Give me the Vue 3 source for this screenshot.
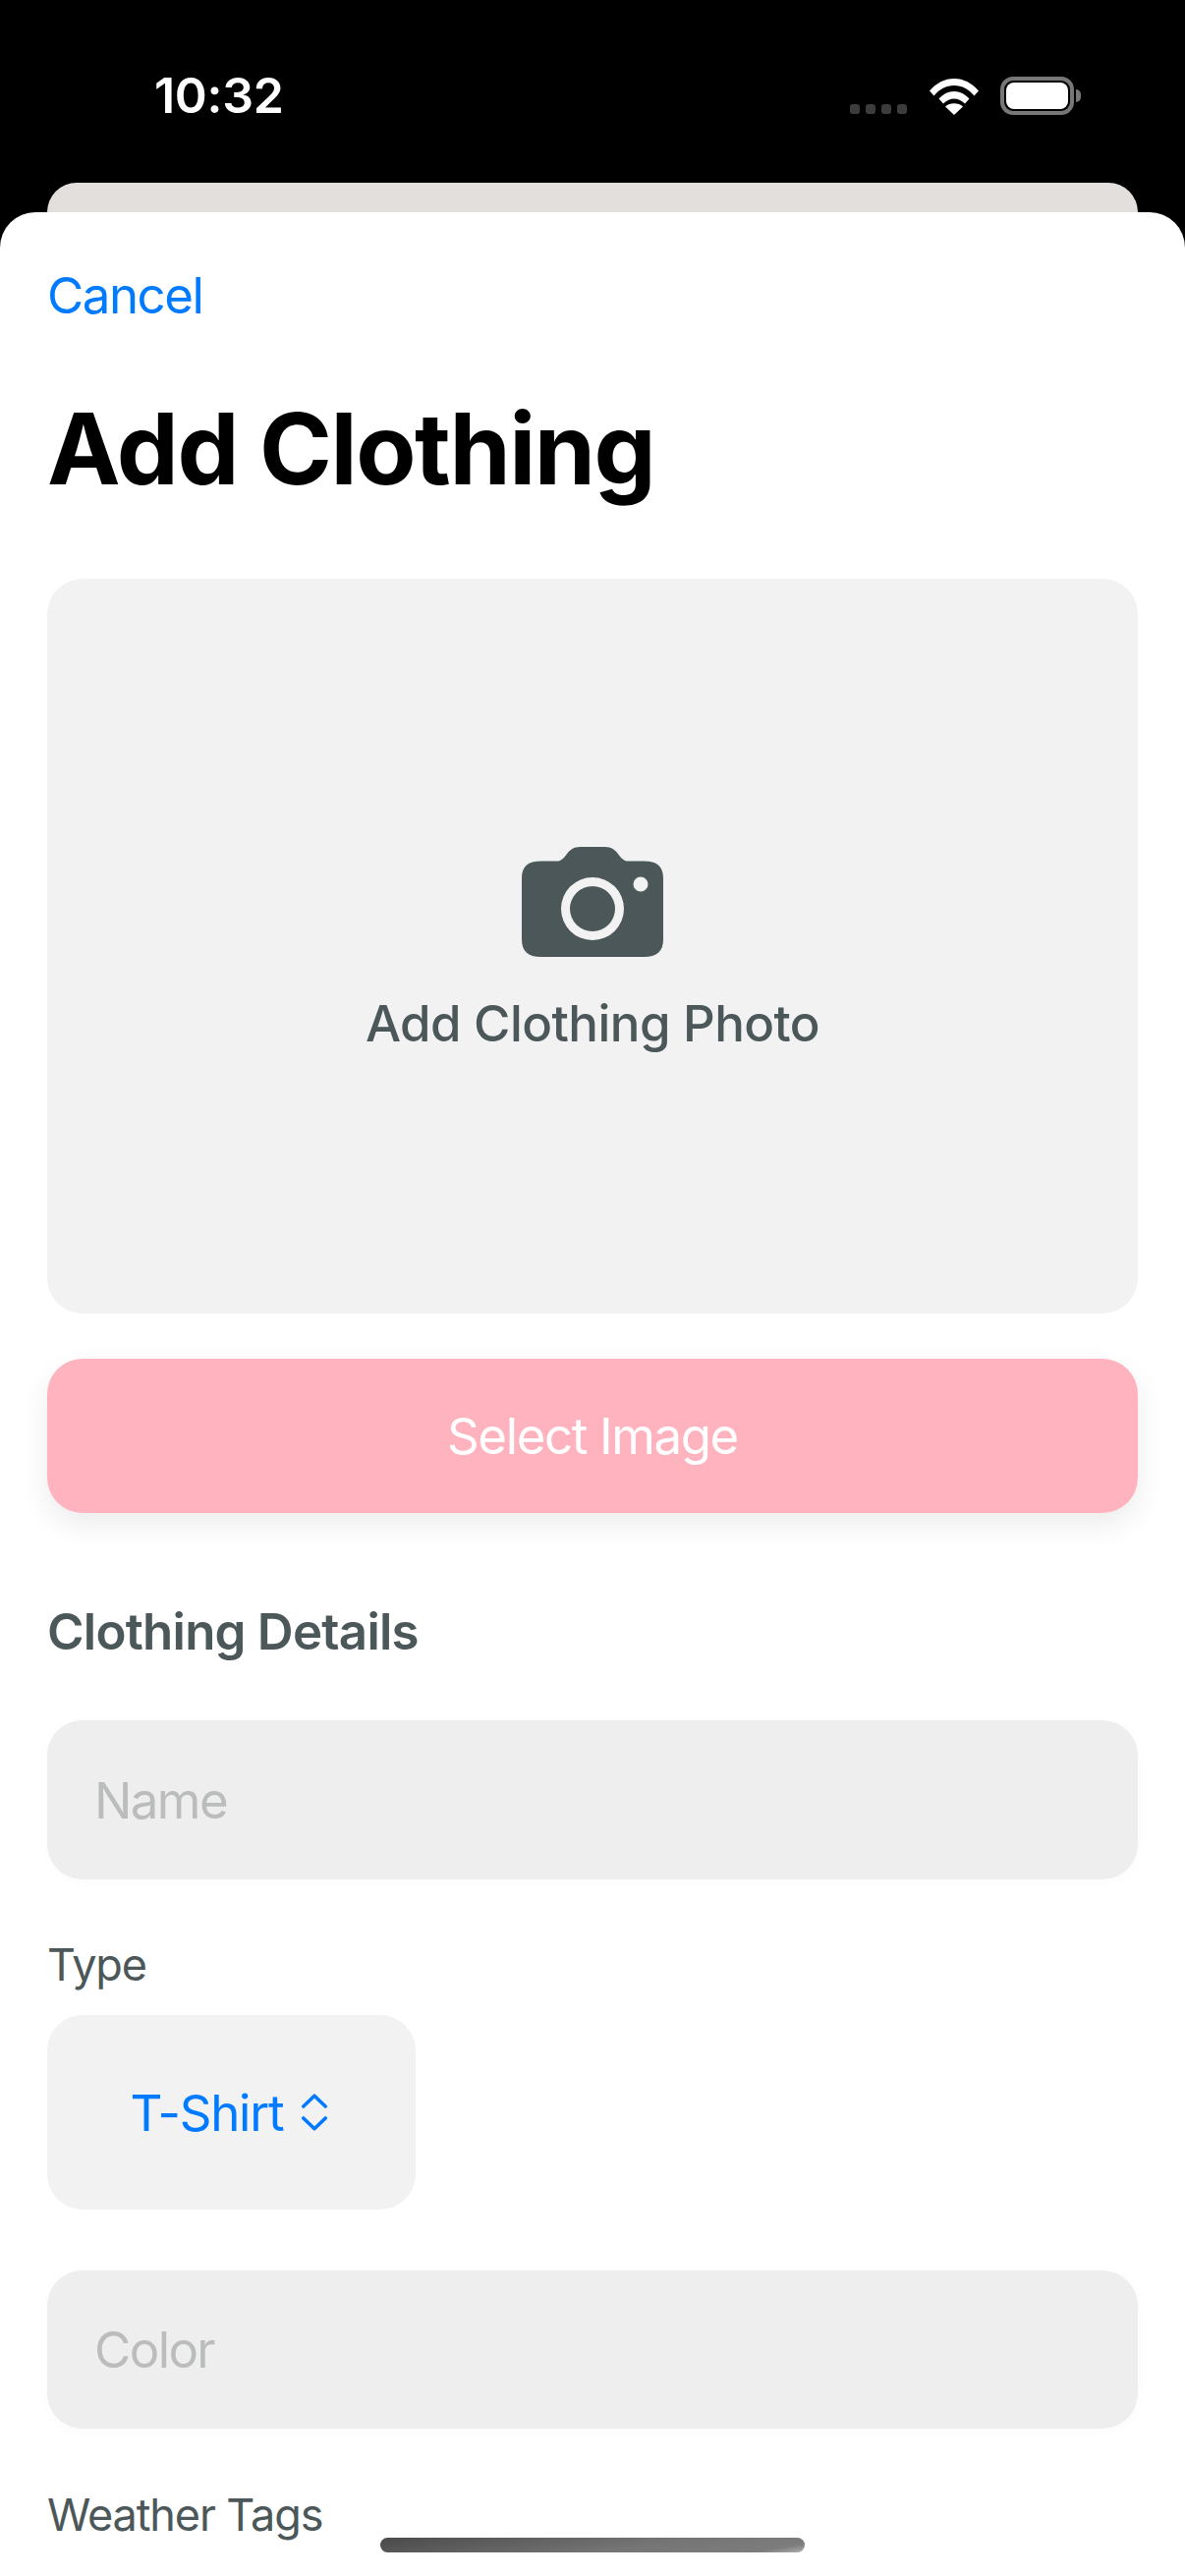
<template>
  <div class="screen">
    <header class="status-bar">
      <span class="time">10:32</span>
      <div class="status-icons">
        <div class="signal">
          <i v-for="n in 4" :key="n"></i>
        </div>
        <svg class="wifi" width="50" height="37" viewBox="0 0 50 37">
          <path d="M0 12.500C6.500 4.800 15.300 0 25 0s18.500 4.800 25 12.500l-4.500 5C40 11 33 7 25 7S10 11 4.500 17.500Z" fill="#fff" />
          <path d="M9.500 20.500C13.500 16 19 13 25 13s11.500 3 15.500 7.500L36 25.500C33 22.500 29.200 20.500 25 20.500s-8 2-11 5Z" fill="#fff" />
          <path d="M16 28.500c2.400-2 5.500-3.200 9-3.200s6.600 1.200 9 3.200L25 37Z" fill="#fff" />
        </svg>
        <div class="battery">
          <div class="battery-level"></div>
        </div>
      </div>
    </header>

    <div class="back-card"></div>

    <main class="sheet">
      <a class="cancel">Cancel</a>
      <h1 class="title">Add Clothing</h1>

      <section class="photo-box">
        <svg class="camera" width="144" height="112" viewBox="0 0 144 112">
          <path
            fill="#4b5758"
            fill-rule="evenodd"
            d="M20 14.500H36C40 14.500 42 12 45 8.500 49 3 52 0 60 0H84C92 0 95 3 99 8.500 102 12 104 14.500 108 14.500H124C138 14.500 144 20 144 32V94C144 106 138 112 124 112H20C6 112 0 106 0 94V32C0 20 6 14.500 20 14.500ZM72 31A32 32 0 1 0 72 95 32 32 0 1 0 72 31ZM72 40A23 23 0 1 1 72 86 23 23 0 1 1 72 40ZM121 30.500A7.500 7.500 0 1 0 121 45.500 7.500 7.500 0 1 0 121 30.500Z"
          />
        </svg>
        <span class="photo-label">Add Clothing Photo</span>
      </section>

      <button class="select-btn" type="button">Select Image</button>

      <h2 class="section-title">Clothing Details</h2>

      <input class="field field-name" placeholder="Name" />

      <label class="field-label type-label">Type</label>
      <div class="picker">
        <span>T-Shirt</span>
        <svg width="26" height="38" viewBox="0 0 26 38">
          <path d="M1.800 13L13 2.200 24.200 13M1.800 25L13 35.800 24.200 25" fill="none" stroke="#007aff" stroke-width="3.600" stroke-linecap="round" stroke-linejoin="round" />
        </svg>
      </div>

      <input class="field field-color" placeholder="Color" />

      <label class="field-label weather-label">Weather Tags</label>

      <div class="home-indicator"></div>
    </main>
  </div>
</template>

<script setup>
</script>

<style>
html,
body {
  margin: 0;
  background: #000;
}
</style>

<style scoped>
.screen {
  width: 1206px;
  height: 2622px;
  overflow: hidden;
  background: #000;
  font-family: Inter, "Liberation Sans", sans-serif;
}

.status-bar {
  height: 186px;
  box-sizing: border-box;
  padding: 69px 113px 0 157px;
  display: flex;
  justify-content: space-between;
  align-items: flex-start;
  color: #fff;
}

.time {
  font-size: 50px;
  font-weight: 600;
  line-height: 56px;
  letter-spacing: -0.3px;
}

.status-icons {
  display: flex;
  align-items: flex-end;
  padding-top: 9px;
}

.signal {
  display: flex;
  gap: 6px;
  margin-right: 23px;
  padding-bottom: 1px;
}

.signal i {
  width: 10px;
  height: 10px;
  border-radius: 3px;
  background: #3c3c3c;
}

.wifi {
  margin-right: 22px;
}

.battery {
  position: relative;
  width: 75px;
  height: 39px;
  box-sizing: border-box;
  padding: 2px;
  border: 4px solid #777;
  border-radius: 13px;
}

.battery::after {
  content: "";
  position: absolute;
  right: -11px;
  top: 9px;
  width: 5px;
  height: 13px;
  border-radius: 0 6px 6px 0;
  background: #777;
}

.battery-level {
  height: 100%;
  border-radius: 8px;
  background: #fff;
}

.back-card {
  height: 30px;
  margin: 0 48px;
  border-radius: 30px 30px 0 0;
  background: #e2dfdc;
}

.sheet {
  position: relative;
  height: 2406px;
  box-sizing: border-box;
  padding: 54px 48px 0;
  overflow: hidden;
  border-radius: 36px 36px 0 0;
  background: #fff;
}

.cancel {
  display: block;
  font-size: 51px;
  line-height: 62px;
  letter-spacing: -1.5px;
  color: #007aff;
}

.title {
  margin: 63px 0 0;
  font-size: 100px;
  font-weight: 700;
  line-height: 124px;
  letter-spacing: -1.5px;
  color: #000;
}

.photo-box {
  height: 748px;
  margin-top: 70px;
  box-sizing: border-box;
  padding-top: 273px;
  display: flex;
  flex-direction: column;
  align-items: center;
  border-radius: 36px;
  background: #f2f2f2;
}

.photo-label {
  margin-top: 37px;
  font-size: 51px;
  font-weight: 500;
  line-height: 62px;
  letter-spacing: -0.55px;
  color: #4b5758;
}

.select-btn {
  display: block;
  width: 100%;
  height: 157px;
  margin-top: 46px;
  border: 0;
  border-radius: 36px;
  background: #ffb3be;
  box-shadow: 0 12px 30px rgba(0, 0, 0, 0.08);
  font-family: inherit;
  font-size: 51px;
  line-height: 62px;
  letter-spacing: -1.4px;
  color: #fff;
}

.section-title {
  margin: 90px 0 0;
  font-size: 51px;
  font-weight: 600;
  line-height: 62px;
  letter-spacing: -0.75px;
  color: #4b5758;
}

.field {
  display: block;
  width: 100%;
  height: 161px;
  box-sizing: border-box;
  padding: 0 48px;
  border: 0;
  border-radius: 36px;
  outline: none;
  background: #eee;
  box-shadow: 0 2px 16px rgba(0, 0, 0, 0.02);
  font-family: inherit;
  font-size: 51px;
  letter-spacing: -1.6px;
  color: #000;
}

.field::placeholder {
  color: #bbbcbc;
  opacity: 1;
}

.field-name {
  margin-top: 59px;
  height: 162px;
}

.field-label {
  display: block;
  font-size: 45px;
  line-height: 54px;
  letter-spacing: -1.1px;
  color: #4b5758;
}

.type-label {
  margin-top: 60px;
}

.picker {
  width: 375px;
  height: 198px;
  margin-top: 24px;
  box-sizing: border-box;
  padding-right: 6px;
  display: flex;
  align-items: center;
  justify-content: center;
  gap: 18px;
  border-radius: 36px;
  background: #f2f2f2;
  font-size: 51px;
  letter-spacing: -1.2px;
  color: #007aff;
}

.field-color {
  margin-top: 62px;
}

.weather-label {
  margin-top: 61px;
}

.home-indicator {
  position: absolute;
  left: 387px;
  top: 2367px;
  width: 432px;
  height: 15px;
  border-radius: 8px;
  background: linear-gradient(170deg, #4a4a4a 0%, #757575 60%, #7c7c7c 90%, #b0b0b0 100%);
}
</style>
